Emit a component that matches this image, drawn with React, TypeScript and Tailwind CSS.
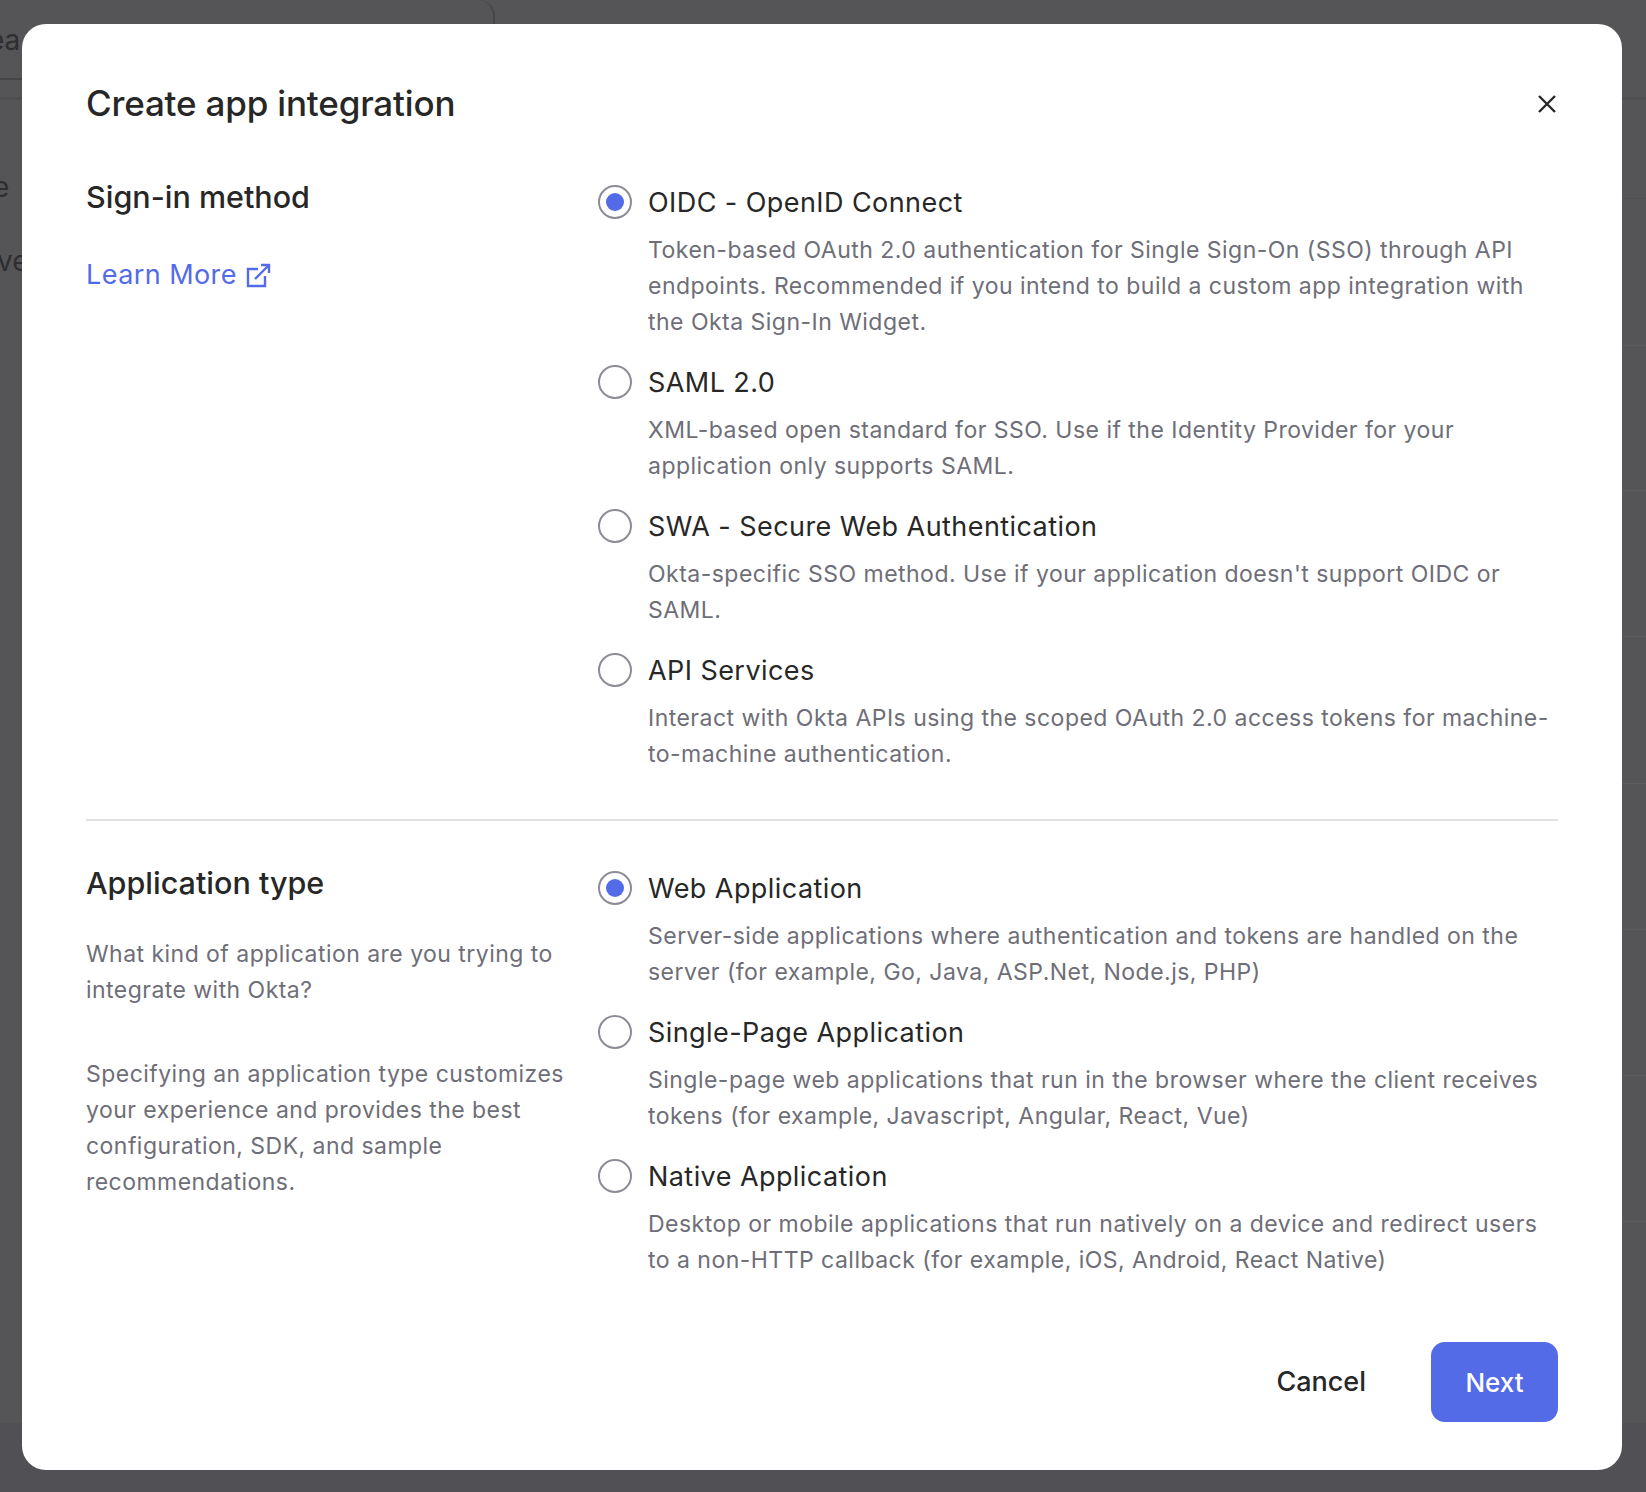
interface RadioOptionProps {
  label: string
  description: string
  checked?: boolean
}

function RadioOption({ label, description, checked }: RadioOptionProps) {
  return (
    <div className="flex gap-[16px]">
      <span className="mt-[1px] flex h-[34px] w-[34px] shrink-0 items-center justify-center rounded-full border-2 border-[#8c8c96] bg-white">
        {checked && <span className="h-[18px] w-[18px] rounded-full bg-[#546be7]" />}
      </span>
      <div className="min-w-0 flex-1">
        <p className="pt-[1px] text-[27px] leading-[36px] tracking-[0.016em] text-[#272727]">{label}</p>
        <p className="mt-[11px] text-[23.04px] leading-[36px] tracking-[0.02em] text-[#6e6e78]">{description}</p>
      </div>
    </div>
  )
}

export default function App() {
  return (
    <div className="relative h-[1492px] w-[1646px] overflow-hidden bg-[#555558] px-[22px] pt-[24px] font-['Inter',sans-serif]">
      {/* page dimmed behind the dialog */}
      <div className="absolute left-0 top-0 h-[80px] w-[495px] rounded-tr-[16px] border-b-2 border-r-2 border-[#454548]" />
      <div className="absolute inset-x-0 top-[97px] h-[3px] bg-[#4f4f52]" />
      <div className="absolute left-[500px] right-0 top-[198px] h-[1px] bg-[#515154]" />
      <div className="absolute left-[500px] right-0 top-[345px] h-[1px] bg-[#5c5c5f]" />
      <div className="absolute left-[500px] right-0 top-[490px] h-[1px] bg-[#5c5c5f]" />
      <div className="absolute left-[500px] right-0 top-[636px] h-[1px] bg-[#5c5c5f]" />
      <div className="absolute left-[500px] right-0 top-[783px] h-[1px] bg-[#5c5c5f]" />
      <div className="absolute left-[500px] right-0 top-[929px] h-[1px] bg-[#5c5c5f]" />
      <div className="absolute left-[500px] right-0 top-[1075px] h-[1px] bg-[#5c5c5f]" />
      <div className="absolute left-[500px] right-0 top-[1221px] h-[1px] bg-[#5c5c5f]" />
      <div className="absolute inset-x-0 bottom-0 top-[1423px] bg-[#515155]" />
      <span className="absolute left-[-12px] top-[19px] text-[28px] text-[#2e2e30]">ea</span>
      <span className="absolute left-[-7px] top-[166px] text-[28px] text-[#2e2e30]">e</span>
      <span className="absolute left-[-3px] top-[240px] text-[28px] text-[#2e2e30]">ve</span>

      <div className="relative flex h-[1446px] w-[1600px] flex-col rounded-[24px] bg-white px-[64px] pt-[55px]">
        <div className="flex items-center justify-between">
          <h1 className="text-[35px] font-medium leading-[48px] tracking-[-0.005em] text-[#272727]">Create app integration</h1>
          <button type="button" aria-label="Close" className="mr-[2px] mt-[2px] text-[#272727]">
            <svg viewBox="0 0 18 18" className="h-[18px] w-[18px]" fill="none" stroke="currentColor" strokeWidth="2.4">
              <path d="M1 1l16 16M17 1L1 17" />
            </svg>
          </button>
        </div>

        <div className="mt-[50px] flex">
          <div className="w-[512px] shrink-0">
            <h2 className="text-[30.5px] font-medium leading-[40px] text-[#272727]">Sign-in method</h2>
            <a className="mt-[40px] flex items-center gap-[9px] text-[27px] leading-[36px] tracking-[0.016em] text-[#546be7]">
              Learn More
              <svg viewBox="0 0 25 25" className="h-[25px] w-[25px]" fill="none" stroke="currentColor" strokeWidth="2.4" aria-hidden="true">
                <path d="M12 6H2v17h17V13M9 16L23 2M15 2h8v8" />
              </svg>
            </a>
          </div>
          <div className="flex flex-1 flex-col gap-[24px] pt-[7px]">
            <RadioOption
              checked
              label="OIDC - OpenID Connect"
              description="Token-based OAuth 2.0 authentication for Single Sign-On (SSO) through API endpoints. Recommended if you intend to build a custom app integration with the Okta Sign-In Widget."
            />
            <RadioOption
              label="SAML 2.0"
              description="XML-based open standard for SSO. Use if the Identity Provider for your application only supports SAML."
            />
            <RadioOption
              label="SWA - Secure Web Authentication"
              description="Okta-specific SSO method. Use if your application doesn't support OIDC or SAML."
            />
            <RadioOption
              label="API Services"
              description="Interact with Okta APIs using the scoped OAuth 2.0 access tokens for machine-to-machine authentication."
            />
          </div>
        </div>

        <div className="mt-[47px] h-[2px] bg-[#e1e1e1]" />

        <div className="mt-[42px] flex">
          <div className="w-[512px] shrink-0 pr-[20px]">
            <h2 className="text-[30.5px] font-medium leading-[40px] text-[#272727]">Application type</h2>
            <p className="mt-[33px] text-[23px] leading-[36px] tracking-[0.02em] text-[#6e6e78]">What kind of application are you trying to integrate with Okta?</p>
            <p className="mt-[48px] text-[23px] leading-[36px] tracking-[0.02em] text-[#6e6e78]">Specifying an application type customizes your experience and provides the best configuration, SDK, and sample recommendations.</p>
          </div>
          <div className="flex flex-1 flex-col gap-[24px] pt-[7px]">
            <RadioOption
              checked
              label="Web Application"
              description="Server-side applications where authentication and tokens are handled on the server (for example, Go, Java, ASP.Net, Node.js, PHP)"
            />
            <RadioOption
              label="Single-Page Application"
              description="Single-page web applications that run in the browser where the client receives tokens (for example, Javascript, Angular, React, Vue)"
            />
            <RadioOption
              label="Native Application"
              description="Desktop or mobile applications that run natively on a device and redirect users to a non-HTTP callback (for example, iOS, Android, React Native)"
            />
          </div>
        </div>

        <div className="mt-[64px] flex items-center justify-end gap-[65px]">
          <button type="button" className="text-[27px] font-medium text-[#272727]">Cancel</button>
          <button type="button" className="h-[80px] w-[127px] rounded-[14px] bg-[#546be7] text-[26px] font-medium text-white">Next</button>
        </div>
      </div>
    </div>
  )
}
